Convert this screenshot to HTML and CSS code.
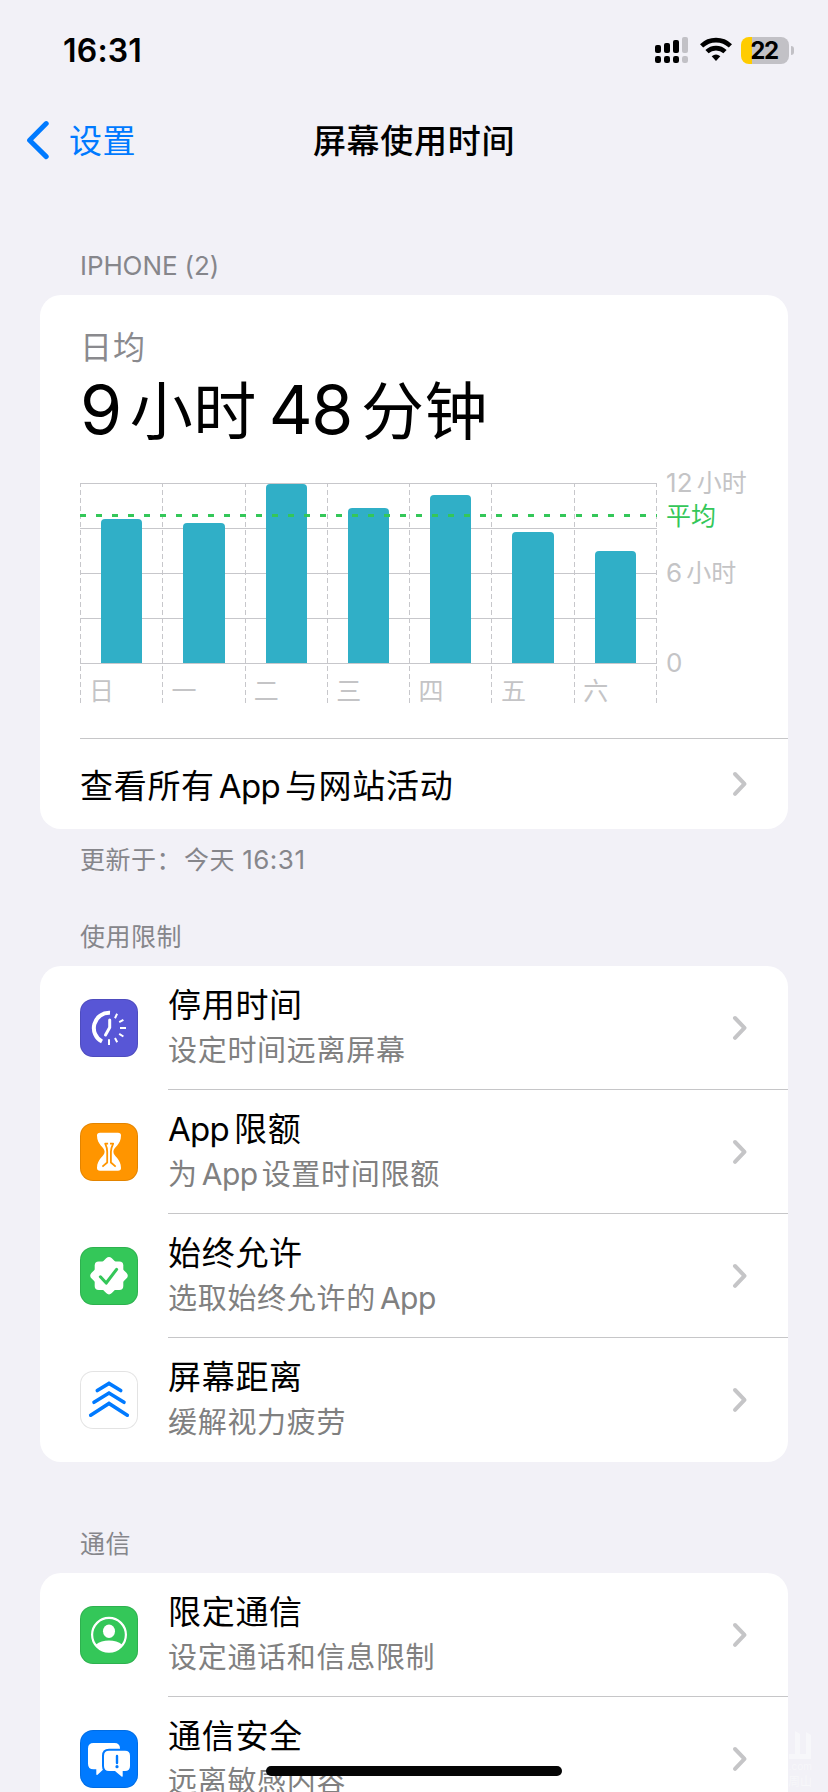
FILE: index.html
```html
<!DOCTYPE html>
<html lang="zh-CN">
<head>
<meta charset="utf-8">
<title>屏幕使用时间</title>
<link rel="stylesheet" href="styles.css">
</head>
<body>
<svg class="defs" width="0" height="0">
  <symbol id="chevron" viewBox="0 0 16 26"><path d="M3 3 L12.5 12.8 L3 22.8" fill="none" stroke="#c5c5c7" stroke-width="4" stroke-linecap="round" stroke-linejoin="round"/></symbol>
</svg>
<div class="screen">
  <header class="status">
    <span class="clock">16:31</span>
    <div class="indicators">
      <svg class="signal" width="34" height="28" viewBox="0 0 34 28">
        <g fill="#000"><rect x="0" y="9" width="6" height="8" rx="2"/><rect x="9" y="7" width="6" height="10" rx="2"/><rect x="18" y="4" width="6" height="13" rx="2"/><rect x="0" y="20" width="6" height="7" rx="2.2"/><rect x="9" y="20" width="6" height="7" rx="2.2"/><rect x="18" y="20" width="6" height="7" rx="2.2"/></g>
        <g fill="#c2c1c6"><rect x="27" y="1" width="6" height="16" rx="2"/><rect x="27" y="20" width="6" height="7" rx="2.2"/></g>
      </svg>
      <svg class="wifi" width="32" height="28" viewBox="0 0 32 28">
        <g fill="none" stroke="#000" stroke-width="4.6"><path d="M1.6 9.9 A20.8 20.8 0 0 1 30.4 9.9"/><path d="M7 15.7 A13 13 0 0 1 25 15.7"/></g>
        <path d="M11.7 20.3 A6.8 6.8 0 0 1 20.3 20.3 L16 25 Z"/>
      </svg>
      <div class="battery"><span class="battery-text">22</span></div>
      <span class="battery-cap"></span>
    </div>
  </header>
  <nav class="nav">
    <a class="back"><svg width="24" height="40" viewBox="0 0 24 40"><path d="M20.2 3.6 L3.6 20.2 L20.2 36.6" fill="none" stroke="#007aff" stroke-width="5" stroke-linecap="round" stroke-linejoin="round"/></svg><span class="back-text">设置</span></a>
    <h1 class="title">屏幕使用时间</h1>
    <span class="nav-end"></span>
  </nav>

  <h2 class="section section-first"><span class="lat-section">IPHONE (2)</span></h2>
  <section class="card">
    <div class="summary">
      <div class="label">日均</div>
      <div class="total"><span class="num">9</span>小时<span class="num mid">48</span>分钟</div>
      <div class="chart">
        <div class="plot">
          <svg width="578" height="221" viewBox="0 0 578 221">
            <g stroke="#c7c7cb" stroke-width="1"><path d="M0 .5H577M0 45.5H577M0 90.5H577M0 135.5H577M0 180.5H577"/>
            <path stroke-dasharray="5 3" stroke-dashoffset="1" d="M.5 0V220M82.5 0V220M165.5 0V220M247.5 0V220M329.5 0V220M411.5 0V220M494.5 0V220M576.5 0V220"/></g>
            <g fill="#30afc7">
              <path d="M21 180V40q0-4 4-4h33q4 0 4 4V180z"/>
              <path d="M103 180V44q0-4 4-4h34q4 0 4 4V180z"/>
              <path d="M186 180V5q0-4 4-4h33q4 0 4 4V180z"/>
              <path d="M268 180V29q0-4 4-4h33q4 0 4 4V180z"/>
              <path d="M350 180V16q0-4 4-4h33q4 0 4 4V180z"/>
              <path d="M432 180V53q0-4 4-4h34q4 0 4 4V180z"/>
              <path d="M515 180V72q0-4 4-4h33q4 0 4 4V180z"/>
            </g>
            <path d="M0 32.5H577" stroke="#34c759" stroke-width="3" stroke-dasharray="6 10"/>
          </svg>
          <div class="days"><span>日</span><span>一</span><span>二</span><span>三</span><span>四</span><span>五</span><span>六</span></div>
        </div>
        <div class="axis">
          <span class="tick"><span class="lat-tick">12</span>小时</span>
          <span class="tick avg">平均</span>
          <span class="tick six"><span class="lat-tick">6</span>小时</span>
          <span class="tick zero"><span class="lat-tick">0</span></span>
        </div>
      </div>
    </div>
    <a class="all"><span class="name">查看所有<span class="lat-name both">App</span>与网站活动</span><svg class="chev" width="16" height="26"><use href="#chevron"/></svg></a>
  </section>
  <p class="note">更新于：<span class="today">今天</span> <span class="lat-note">16:31</span></p>

  <h2 class="section section-limits">使用限制</h2>
  <section class="card">
    <a class="row">
      <svg class="icon purple" viewBox="0 0 58 58"><g fill="none" stroke="#fff"><path stroke-width="4" d="M30 13.8 A15.3 15.3 0 0 0 22 42.6"/><path stroke-width="3" stroke-linejoin="round" stroke-linecap="round" d="M29.7 21V28.5L25.5 36"/><path stroke-width="2" d="M35 19.2L37.1 14.8M39.2 23.2L43.4 20.9M40 29H46M39.2 34.9L43.4 37.5M35 39L37.2 43.2M29 40.2V45.9"/></g></svg>
      <div class="body"><div class="texts"><div class="name">停用时间</div><div class="desc">设定时间远离屏幕</div></div><svg class="chev" width="16" height="26"><use href="#chevron"/></svg></div>
    </a>
    <a class="row">
      <svg class="icon orange" viewBox="0 0 58 58"><path fill="#fff" d="M20 9.7H38Q41 9.7 41 12.5C41 22 33.4 24 33.4 28.7C33.4 33.4 41 35.5 41 45Q41 47.7 38 47.7H20Q17 47.7 17 45C17 35.5 24.6 33.4 24.6 28.7C24.6 24 17 22 17 12.5Q17 9.7 20 9.7Z"/><path fill="none" stroke="#ff9500" stroke-width="1.8" stroke-linejoin="round" d="M28.1 20.7H25.2C26.3 23 27.2 25.5 27.2 28.7C27.2 31 27.2 33 27.2 39.5L22.4 43.6M30 20.7H33.2C32.1 23 30.9 25.5 30.9 28.7C30.9 31 30.9 33 30.9 39.5L35.7 43.6"/></svg>
      <div class="body"><div class="texts"><div class="name"><span class="lat-name">App</span>限额</div><div class="desc">为<span class="lat-desc both">App</span>设置时间限额</div></div><svg class="chev" width="16" height="26"><use href="#chevron"/></svg></div>
    </a>
    <a class="row">
      <svg class="icon green" viewBox="0 0 58 58"><g fill="#fff"><rect x="14.7" y="14.4" width="28.6" height="28.6" rx="4"/><rect x="14.7" y="14.4" width="28.6" height="28.6" rx="4" transform="rotate(45 29 28.7)"/></g><path d="M20.4 29.8L26.2 36L36.6 22.4" fill="none" stroke="#34c759" stroke-width="3.1" stroke-linecap="round" stroke-linejoin="round"/></svg>
      <div class="body"><div class="texts"><div class="name">始终允许</div><div class="desc">选取始终允许的<span class="lat-desc both">App</span></div></div><svg class="chev" width="16" height="26"><use href="#chevron"/></svg></div>
    </a>
    <a class="row">
      <svg class="icon white" viewBox="0 0 58 58"><path d="M17.3 19.5L29 12.4L40.7 19.5M14 31.3L29 22L44 31.3M10.7 44.2L29 32.4L47.3 44.2" fill="none" stroke="#007aff" stroke-width="3.6" stroke-linecap="round" stroke-linejoin="miter"/></svg>
      <div class="body"><div class="texts"><div class="name">屏幕距离</div><div class="desc">缓解视力疲劳</div></div><svg class="chev" width="16" height="26"><use href="#chevron"/></svg></div>
    </a>
  </section>

  <h2 class="section section-comm">通信</h2>
  <section class="card">
    <a class="row">
      <svg class="icon green" viewBox="0 0 58 58"><circle cx="29" cy="28.8" r="16.9" fill="none" stroke="#fff" stroke-width="2.2"/><ellipse cx="29" cy="25.2" rx="6" ry="6.8" fill="#fff"/><path fill="#fff" d="M16 38.5Q21 34.5 29 34.5Q37 34.5 42 38.5Q37 45.8 29 45.8Q21 45.8 16 38.5Z"/></svg>
      <div class="body"><div class="texts"><div class="name">限定通信</div><div class="desc">设定通话和信息限制</div></div><svg class="chev" width="16" height="26"><use href="#chevron"/></svg></div>
    </a>
    <a class="row">
      <svg class="icon blue" viewBox="0 0 58 58"><path fill="#fff" d="M13.5 13H34.5Q40 13 40 18.5V33.8Q40 39.3 34.5 39.3H23.5L17.5 44.7Q16.3 45.4 16.3 44V39.3H13.5Q8 39.3 8 33.8V18.5Q8 13 13.5 13Z"/><path fill="#fff" stroke="#007aff" stroke-width="4" paint-order="stroke" d="M29 20.7H45Q50 20.7 50 25.7V36Q50 41 45 41H42.7V46Q42.7 47.2 41.5 46.5L35 41H29Q24 41 24 36V25.7Q24 20.7 29 20.7Z"/><path d="M37 26V33" stroke="#007aff" stroke-width="2.4" stroke-linecap="round"/><circle cx="37" cy="36.7" r="1.6" fill="#007aff"/></svg>
      <div class="body"><div class="texts"><div class="name">通信安全</div><div class="desc">远离敏感内容</div></div><svg class="chev" width="16" height="26"><use href="#chevron"/></svg></div>
    </a>
  </section>
  <div class="mark">
    <svg width="23" height="30" viewBox="0 0 23 30"><path fill="#f7f7fa" d="M0 24H6V1L11 4V24H17V2L22 5V29H0Z"/></svg>
    <span class="mark-site">.com</span><span class="mark-name">周山</span>
  </div>
  <div class="home"></div>
</div>
</body>
</html>
```
FILE: styles.css
```css
* { box-sizing: border-box; margin: 0; padding: 0; }
body {
  width: 828px;
  height: 1792px;
  overflow: hidden;
  background: #f2f1f7;
  color: #000;
  font-family: "Noto Sans CJK SC", sans-serif;
}
.defs { position: absolute; }
.screen { position: relative; height: 1792px; overflow: hidden; padding: 0 40px; }

.status { height: 100px; margin-right: -6px; padding-left: 23px; display: flex; align-items: center; justify-content: space-between; }
.clock { font: 600 32px/40px Inter, sans-serif; letter-spacing: .2px; padding-top: 1px; }
.indicators { display: flex; align-items: center; }
.wifi { margin: 0 9px 0 11px; }
.signal, .wifi { display: block; }
.battery {
  width: 48px; height: 27px; border-radius: 8px;
  background: linear-gradient(90deg, #ffcc00 11px, #c2c1c6 11px);
  display: flex; align-items: center; justify-content: center;
}
.battery-text { font: 700 24px/27px Inter, sans-serif; letter-spacing: -1.4px; padding-right: 2px; }
.battery-cap { width: 3px; height: 9px; margin-left: 2px; border-radius: 0 4px 4px 0; background: #c2c1c6; }

.nav { height: 80px; margin: 0 -14px; display: grid; grid-template-columns: 1fr auto 1fr; align-items: center; }
.back { display: flex; align-items: center; gap: 19px; color: #007aff; }
.back-text { font-size: 33px; line-height: 48px; letter-spacing: .4px; padding-bottom: 3px; }
.title { font-size: 33px; line-height: 48px; font-weight: 500; letter-spacing: .7px; padding: 0 0 3px 0; }

.section, .note { padding-left: 40px; font-size: 25px; line-height: 36px; font-weight: 400; color: #86868b; letter-spacing: .5px; }
.section-first { height: 115px; padding-top: 66px; }
.note { height: 70px; padding-top: 11px; }
.today { margin-left: 2px; }
.section-limits { height: 67px; padding-top: 18px; }
.section-comm { height: 111px; padding-top: 62px; }
.lat-section, .lat-note { font-family: Inter, sans-serif; font-size: 26px; letter-spacing: -.1px; line-height: 0; }
.lat-note { letter-spacing: .5px; margin-left: 1px; }

.card { background: #fff; border-radius: 21px; overflow: hidden; }
.summary { height: 443px; padding: 26px 0 0 40px; }
.label { font-size: 32px; line-height: 48px; letter-spacing: 1px; color: #8a8a8e; }
.total { height: 114px; font-size: 63px; line-height: 76px; letter-spacing: .5px; white-space: nowrap; }
.num { font-family: Inter, sans-serif; font-size: 68px; line-height: 0; letter-spacing: -1.4px; margin-right: 9px; }
.mid { margin-left: 12px; }

.chart { display: flex; }
.plot { width: 577px; height: 240px; }
.plot svg { display: block; margin-bottom: -33px; }
.days { display: grid; grid-template-columns: repeat(7, 82.4px); font-size: 25px; line-height: 36px; color: #c4c4c6; }
.days span { padding-left: 9px; }
.axis { width: 110px; margin: -18px 0 0 9px; display: flex; flex-direction: column; }
.tick { font-size: 25px; line-height: 32px; height: 32px; color: #c4c4c6; white-space: nowrap; }
.lat-tick { font-family: Inter, sans-serif; font-size: 26px; line-height: 0; margin-right: 4px; letter-spacing: .2px; }
.avg { color: #34c759; padding-top: 1px; }
.six { margin-top: 26px; }
.zero { margin-top: 58px; }

.all { height: 91px; margin-left: 40px; padding-right: 40px; border-top: 1px solid #c6c6c8; display: flex; align-items: center; justify-content: space-between; }
.all .name { padding-bottom: 1px; }
.name { font-size: 33px; line-height: 46px; letter-spacing: .7px; white-space: nowrap; }
.texts { padding-bottom: 5px; }
.desc { font-size: 29px; line-height: 44px; letter-spacing: .7px; color: #808080; white-space: nowrap; }
.lat-name { font-family: Inter, sans-serif; font-size: 33px; line-height: 0; letter-spacing: -.7px; margin-right: 5px; }
.lat-desc { font-family: Inter, sans-serif; font-size: 30px; line-height: 0; letter-spacing: -.5px; margin-right: 4px; }
.both { margin-left: 4px; }

.row { display: flex; align-items: center; height: 124px; padding-left: 40px; }
.icon { width: 58px; height: 58px; border-radius: 13px; flex: none; box-shadow: inset 0 0 0 1px rgba(0, 0, 0, .11); }
.purple { background: #5856d6; }
.orange { background: #ff9500; }
.green { background: #34c759; }
.white { background: #fff; }
.blue { background: #007aff; }
.body { flex: 1; height: 124px; margin-left: 30px; padding-right: 40px; display: flex; align-items: center; justify-content: space-between; border-bottom: 1px solid #c6c6c8; }
.row:last-child .body { border-bottom-color: transparent; }
.chev { display: block; flex: none; }

.mark { position: absolute; left: 789px; top: 1730px; width: 23px; height: 62px; overflow: hidden; display: flex; flex-direction: column; align-items: flex-end; color: #f7f7fa; }
.mark svg { flex: none; }
.mark-site { font: 10px/12px Inter, sans-serif; }
.mark-name { font-size: 12px; line-height: 18px; white-space: nowrap; }
.home { position: absolute; left: 266px; top: 1766px; width: 296px; height: 10px; border-radius: 5px; background: #050505; }
```
